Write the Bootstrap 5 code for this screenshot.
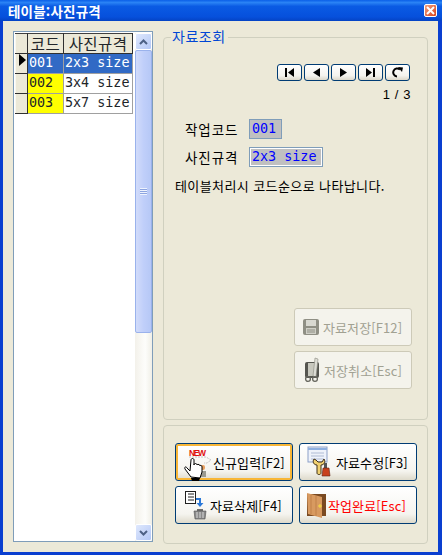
<!DOCTYPE html>
<html lang="ko">
<head>
    <meta charset="UTF-8">
    <meta name="viewport" content="width=device-width, initial-scale=1.0">
    <title>테이블:사진규격</title>
    <link href="https://cdn.jsdelivr.net/npm/bootstrap@5.3.0/dist/css/bootstrap.min.css" rel="stylesheet">
    <style>
        html, body { height: 100%; overflow: hidden; }
        body { background: #0a3fd0; font-family: "DejaVu Sans Mono", "Noto Sans CJK KR", monospace; font-size: 13px; color: #000; }
        .xp-window { width: 442px; height: 555px; background: #0a3fd0; }
        .xp-title { height: 21px; padding: 0 5px 0 8px; background: linear-gradient(#0a5fe8, #2a83f5 12%, #0a5be4 30%, #0650dc 80%, #0443c4); color: #fff; font: bold 13.500px "Noto Sans CJK KR", sans-serif; letter-spacing: .2px; }
        .xp-close { width: 13px; height: 13px; border-radius: 2px; background: linear-gradient(135deg, #f0a080, #d8431c); border: 1px solid #fff; }
        .xp-client { background: #ece9d8; margin: 0 4px 3px 3px; height: 531px; padding: 10px 10px 0 10px; }
        .data-grid { width: 140px; height: 511px; background: #fff; border: 1px solid #7f9db9; padding: 1px 0 0 1px; }
        .grid-cells { width: 118px; }
        .grid-table { margin: 0; width: 118px; table-layout: fixed; border-collapse: collapse; --bs-table-bg: transparent; font-size: 13.4px; line-height: 18px; }
        .grid-table td, .grid-table th { padding: 0 0 0 1px; height: 20px; border: 1px solid #a0a0a0; font-weight: 400; white-space: nowrap; overflow: hidden; }
        .grid-table th { background: #ece9d8; border-color: #404040 #303030 #303030 #f8f8f0; text-align: center; padding: 0; font-family: "Noto Sans CJK KR", sans-serif; font-size: 15.500px; letter-spacing: .4px; }
        .grid-ind { width: 12px; }
        .grid-code { width: 36px; }
        .grid-table .cell-sel { background: #316ac5; color: #fff; --bs-table-color-state: #fff; }
        .grid-table .cell-yellow { background: #ff0; }
        .grid-arrow { width: 0; height: 0; border-left: 7px solid #000; border-top: 6px solid transparent; border-bottom: 6px solid transparent; display: block; margin-left: 3px; }
        .xp-scroll { width: 17px; background: linear-gradient(90deg, #f3f1ea, #fdfdfb 60%, #f0efe7); }
        .scroll-btn { height: 17px; border: 1px solid #fff; border-radius: 2px; background: linear-gradient(135deg, #dfe8fd, #b4c8f6); }
        .scroll-thumb { height: 283px; border: 1px solid #9ab2ec; border-radius: 2px; background: linear-gradient(90deg, #d2dcfa, #c0cffa 50%, #b6c8f6); }
        .grip-lines { width: 7px; height: 7px; background: repeating-linear-gradient(#eef3fe 0 1px, #8ca4e0 1px 2px); }
        .right-col { width: 265px; margin-left: 10px; }
        .group-box { border: 1px solid #d0d0bf; border-radius: 4px; position: relative; }
        .group-top { height: 383px; margin-top: 6px; padding: 26px 15px 30px 11px; }
        .group-bottom { height: 119px; margin-top: 5px; padding: 17px 10px 0 11px; }
        .group-legend { position: absolute; left: 7px; top: -11px; background: #ece9d8; padding: 0 2px 0 1px; color: #0046d5; font: 14px/19px "Noto Sans CJK KR", sans-serif; letter-spacing: .5px; }
        .nav-row { gap: 2px; margin-right: 2px; }
        .nav-btn { width: 25px; height: 17px; padding: 0; border: 1px solid #003c74; border-radius: 3px; background: linear-gradient(#fff, #f4f3ee 70%, #dcd8ca); line-height: 0; }
        .page-count { font: 13px/16px "Liberation Sans", sans-serif; letter-spacing: .6px; margin: 6px 1px 0 0; }
        .field-label { width: 66px; font-family: "Noto Sans CJK KR", sans-serif; font-size: 13.5px; letter-spacing: .9px; padding-left: 10px; white-space: nowrap; }
        .field-box { height: 20px; background: #c0c0c0; color: #0000ff; border: 1px solid #7f9db9; padding: 0 0 0 2px; font-size: 13.4px; line-height: 18px; }
        .field-code { width: 33px; }
        .field-size { width: 74px; box-shadow: inset 0 0 0 1px #fff; }
        .note-text { font-family: "Noto Sans CJK KR", sans-serif; font-size: 13px; letter-spacing: .4px; line-height: 16px; margin-top: 10px; white-space: nowrap; }
        .xp-btn { --bs-btn-padding-x: 0; --bs-btn-padding-y: 0; width: 118px; height: 38px; border: 1px solid #003c74; border-radius: 3px; background: linear-gradient(#fff, #f5f4ef 75%, #dedacb); font: 13px "Noto Sans CJK KR", sans-serif; color: #000; letter-spacing: .1px; white-space: nowrap; }
        .xp-btn:disabled { opacity: 1; border-color: #cdcab8; background: #f4f3ec; color: #a1a192; }
        .xp-btn.btn-hot { border-color: #003c74; box-shadow: inset 0 0 0 2px #f8b636; }
        .xp-btn.btn-red { color: #f00; }
        .btn-icon { flex: none; overflow: visible; }
    </style>
</head>
<body>

<div class="xp-window d-flex flex-column">
    <!-- title bar -->
    <div class="xp-title d-flex align-items-center justify-content-between">
        <span>테이블:사진규격</span>
        <span class="xp-close d-flex align-items-center justify-content-center">
            <svg width="9" height="9" viewBox="0 0 9 9"><path d="M1 1l7 7M8 1l-7 7" stroke="#fff" stroke-width="2"/></svg>
        </span>
    </div>

    <div class="xp-client d-flex align-items-start">
        <!-- grid on the left -->
        <div class="data-grid d-flex flex-shrink-0">
            <div class="grid-cells flex-shrink-0">
                <table class="table grid-table">
                    <colgroup><col class="grid-ind"><col class="grid-code"><col></colgroup>
                    <tr><th></th><th>코드</th><th>사진규격</th></tr>
                    <tr><th><span class="grid-arrow"></span></th><td class="cell-sel">001</td><td class="cell-sel">2x3 size</td></tr>
                    <tr><th></th><td class="cell-yellow">002</td><td>3x4 size</td></tr>
                    <tr><th></th><td class="cell-yellow">003</td><td>5x7 size</td></tr>
                </table>
            </div>
            <div class="xp-scroll ms-auto d-flex flex-column">
                <div class="scroll-btn d-flex align-items-center justify-content-center">
                    <svg width="9" height="6" viewBox="0 0 9 6"><path d="M1 5l3.5-3.5L8 5" fill="none" stroke="#4d6185" stroke-width="2"/></svg>
                </div>
                <div class="scroll-thumb d-flex align-items-center justify-content-center"><span class="grip-lines"></span></div>
                <div class="flex-grow-1"></div>
                <div class="scroll-btn d-flex align-items-center justify-content-center">
                    <svg width="9" height="6" viewBox="0 0 9 6"><path d="M1 1l3.5 3.5L8 1" fill="none" stroke="#4d6185" stroke-width="2"/></svg>
                </div>
            </div>
        </div>

        <div class="right-col flex-shrink-0">
            <!-- lookup group -->
            <div class="group-box group-top d-flex flex-column">
                <span class="group-legend">자료조회</span>
                <div class="d-flex justify-content-end">
                    <div class="d-flex nav-row">
                        <button class="btn nav-btn"><svg width="11" height="9" viewBox="0 0 11 9"><path d="M1 0h2v9H1zM10 0v9L4 4.5z"/></svg></button>
                        <button class="btn nav-btn"><svg width="9" height="9" viewBox="0 0 9 9"><path d="M8 0v9L1 4.5z"/></svg></button>
                        <button class="btn nav-btn"><svg width="9" height="9" viewBox="0 0 9 9"><path d="M1 0v9l7-4.5z"/></svg></button>
                        <button class="btn nav-btn"><svg width="11" height="9" viewBox="0 0 11 9"><path d="M1 0v9l6-4.5zM8 0h2v9H8z"/></svg></button>
                        <button class="btn nav-btn"><svg width="11" height="11" viewBox="0 0 11 11"><path d="M8 2.6A4 4 0 1 0 5 9.5" fill="none" stroke="#000" stroke-width="2"/><path d="M6 0l5 .5-1 4.5z"/></svg></button>
                    </div>
                </div>
                <div class="page-count text-end">1 / 3</div>
                <div class="d-flex align-items-center" style="margin-top:16px">
                    <span class="field-label">작업코드</span><span class="field-box field-code ms-2">001</span>
                </div>
                <div class="d-flex align-items-center" style="margin-top:8px">
                    <span class="field-label">사진규격</span><span class="field-box field-size ms-2">2x3 size</span>
                </div>
                <div class="note-text">테이블처리시 코드순으로 나타납니다.</div>

                <div class="mt-auto d-flex flex-column align-items-end" style="gap:5px">
                    <button class="btn xp-btn d-flex align-items-center" disabled>
                        <svg class="btn-icon" style="margin:0 3px 0 7px" width="18" height="18" viewBox="0 0 18 18"><rect x="1" y="1" width="16" height="16" rx="2" fill="#8f8f84"/><rect x="4" y="2" width="10" height="6" fill="#d8d8d0"/><rect x="4" y="10" width="10" height="6" fill="#cfcfc6"/><path d="M5 12h8M5 14h8" stroke="#8f8f84"/></svg>
                        자료저장[F12]
                    </button>
                    <button class="btn xp-btn d-flex align-items-center" disabled>
                        <svg class="btn-icon" style="margin:0 2px 0 9px" width="18" height="26" viewBox="0 0 18 26"><rect x="1" y="5" width="14" height="16" rx="2" fill="#55554f"/><rect x="4" y="6" width="8" height="13" fill="#c8c8be"/><path d="M11 1l3 1-2 18-3-1z" fill="#dcdcd4" stroke="#8a8a80" stroke-width=".6"/><circle cx="4" cy="22" r="2.4" fill="none" stroke="#66665e" stroke-width="1.3"/><circle cx="11" cy="22" r="2.4" fill="none" stroke="#66665e" stroke-width="1.3"/></svg>
                        저장취소[Esc]
                    </button>
                </div>
            </div>

            <!-- action group -->
            <div class="group-box group-bottom">
                <div class="d-grid" style="grid-template-columns:118px 118px;column-gap:6px;row-gap:5px">
                    <button class="btn xp-btn btn-hot d-flex align-items-center">
                        <svg class="btn-icon" style="margin:5px 1px 0 6px" width="30" height="34" viewBox="0 0 30 34">
                            <text x="7" y="8" font-family="Liberation Sans, sans-serif" font-weight="700" font-size="8.5" fill="#e01010" textLength="17">NEW</text>
                            <path d="M7 9h17l5 3-4 3h-3" fill="none" stroke="#c4c4c4" stroke-dasharray="2 1"/>
                            <rect x="18" y="17" width="5" height="5" rx="2" fill="#e8a060"/><rect x="17" y="23" width="7" height="6" fill="#9a9a90"/>
                            <path d="M9 29 3 21c-1-2 1-3 2-1l3 3 1-11c0-2 3-2 3 0l0 5c0-2 3-2 3 0 0-1 3-1 3 1 0-1 2-1 2 1v5l-2 6z" fill="#fff" stroke="#000"/>
                            <path d="M9 30h9l-1 3h-7z"/>
                        </svg>
                        신규입력[F2]
                    </button>
                    <button class="btn xp-btn d-flex align-items-center">
                        <svg class="btn-icon" style="margin:0 3px 0 7px" width="26" height="32" viewBox="0 0 26 32">
                            <rect x="1" y="1" width="19" height="15" fill="#eef2fa" stroke="#8ca0c8"/><path d="M1 2h19v2H1z" fill="#8fb0e0"/><path d="M4 7h13M4 10h13M4 13h13" stroke="#b0bcd4"/>
                            <path d="M7 13c-2 3 0 6 3 6v8c0 2 4 2 4 0v-8c3 0 5-3 3-6l-2 3h-4l-2-2z" fill="#f0d070" stroke="#403018"/>
                            <rect x="17" y="17" width="3" height="5" fill="#555"/><path d="M16 22h6l1 8h-8z" fill="#c8401c" stroke="#602010" stroke-width=".6"/>
                        </svg>
                        자료수정[F3]
                    </button>
                    <button class="btn xp-btn d-flex align-items-center">
                        <svg class="btn-icon" style="margin:0 3px 0 9px" width="22" height="28" viewBox="0 0 22 28">
                            <rect x=".5" y=".5" width="10" height="12" fill="#fff" stroke="#202020"/><path d="M3 3h6M3 6h6M3 9h6" stroke="#202020"/>
                            <path d="M11 8h4v5" fill="none" stroke="#2a78d8" stroke-width="2"/><path d="M11.500 12h7l-3.500 4z" fill="#2a78d8"/>
                            <path d="M12 18h6v2h-6z" fill="#707070"/><path d="M9 20h12l-1 8H10z" fill="#8a8a8a" stroke="#505050" stroke-width=".6"/><path d="M12 21v6M15 21v6M18 21v6" stroke="#d8d8d8"/>
                        </svg>
                        자료삭제[F4]
                    </button>
                    <button class="btn xp-btn btn-red d-flex align-items-center">
                        <svg class="btn-icon" style="margin:0 1px 0 7px" width="20" height="26" viewBox="0 0 20 26">
                            <path d="M0 2h19v22H0z" fill="#7a4a22"/><path d="M0 1l15 4v21L1 22z" fill="#d89a60"/><path d="M4 3v19M9 4v20" stroke="#c08048"/><path d="M11 14h4M13 12v4" stroke="#f6e040"/>
                        </svg>
                        작업완료[Esc]
                    </button>
                </div>
            </div>
        </div>
    </div>
</div>

</body>
</html>
